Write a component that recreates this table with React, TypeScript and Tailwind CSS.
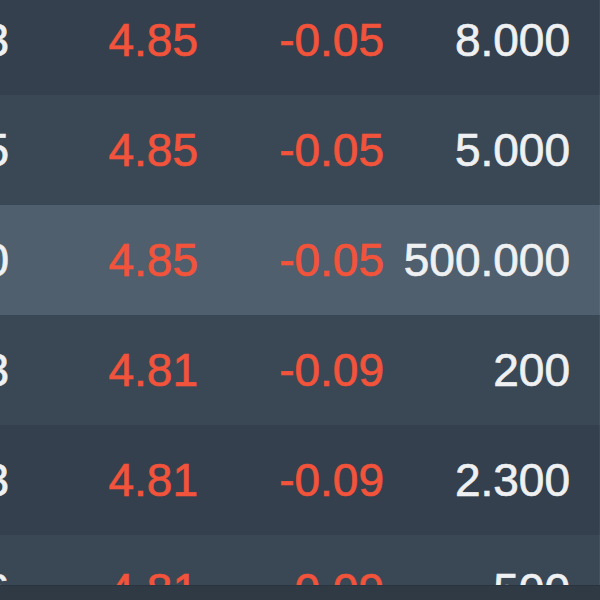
const rows = [
  { time: '10:15:23', price: '4.85', change: '-0.05', vol: '8.000' },
  { time: '10:15:05', price: '4.85', change: '-0.05', vol: '5.000' },
  { time: '10:14:50', price: '4.85', change: '-0.05', vol: '500.000' },
  { time: '10:14:33', price: '4.81', change: '-0.09', vol: '200' },
  { time: '10:14:13', price: '4.81', change: '-0.09', vol: '2.300' },
  { time: '10:13:56', price: '4.81', change: '-0.09', vol: '500' },
]

// trade ticker — last trades, row 3 is the selected one
export default function App() {
  return (
    <div
      className="flex h-[600px] w-[600px] flex-col overflow-hidden bg-[#34404d]"
      style={{ fontFamily: '"Liberation Sans", Arial, sans-serif' }}
    >
      <div className="relative min-h-0 flex-1 overflow-hidden">
        <div className="mt-[-15px] flex flex-col">
          {rows.map((r, i) => {
            const bg =
              i === 2 ? 'bg-[#4f5f6d]' : i % 2 === 0 ? 'bg-[#34404d]' : 'bg-[#3a4856]'
            return (
              <div
                key={i}
                className={`flex h-[110px] shrink-0 items-center text-[46px] leading-none [-webkit-text-stroke:0.7px_currentColor] ${bg}`}
              >
                <div className="flex w-[9px] shrink-0 justify-end whitespace-nowrap text-[#eef0f2]">
                  <span>{r.time}</span>
                </div>
                <div className="flex w-[189px] shrink-0 justify-end text-[#f2533b]">{r.price}</div>
                <div className="flex w-[186px] shrink-0 justify-end text-[#f2533b]">{r.change}</div>
                <div className="flex w-[186px] shrink-0 justify-end text-[#eef0f2]">{r.vol}</div>
                <div className="h-full flex-1 border-r border-white/5" />
              </div>
            )
          })}
        </div>
      </div>
      <div className="h-[15px] shrink-0 border-t border-[#2a343e] bg-[#2f3a45]" />
    </div>
  )
}
